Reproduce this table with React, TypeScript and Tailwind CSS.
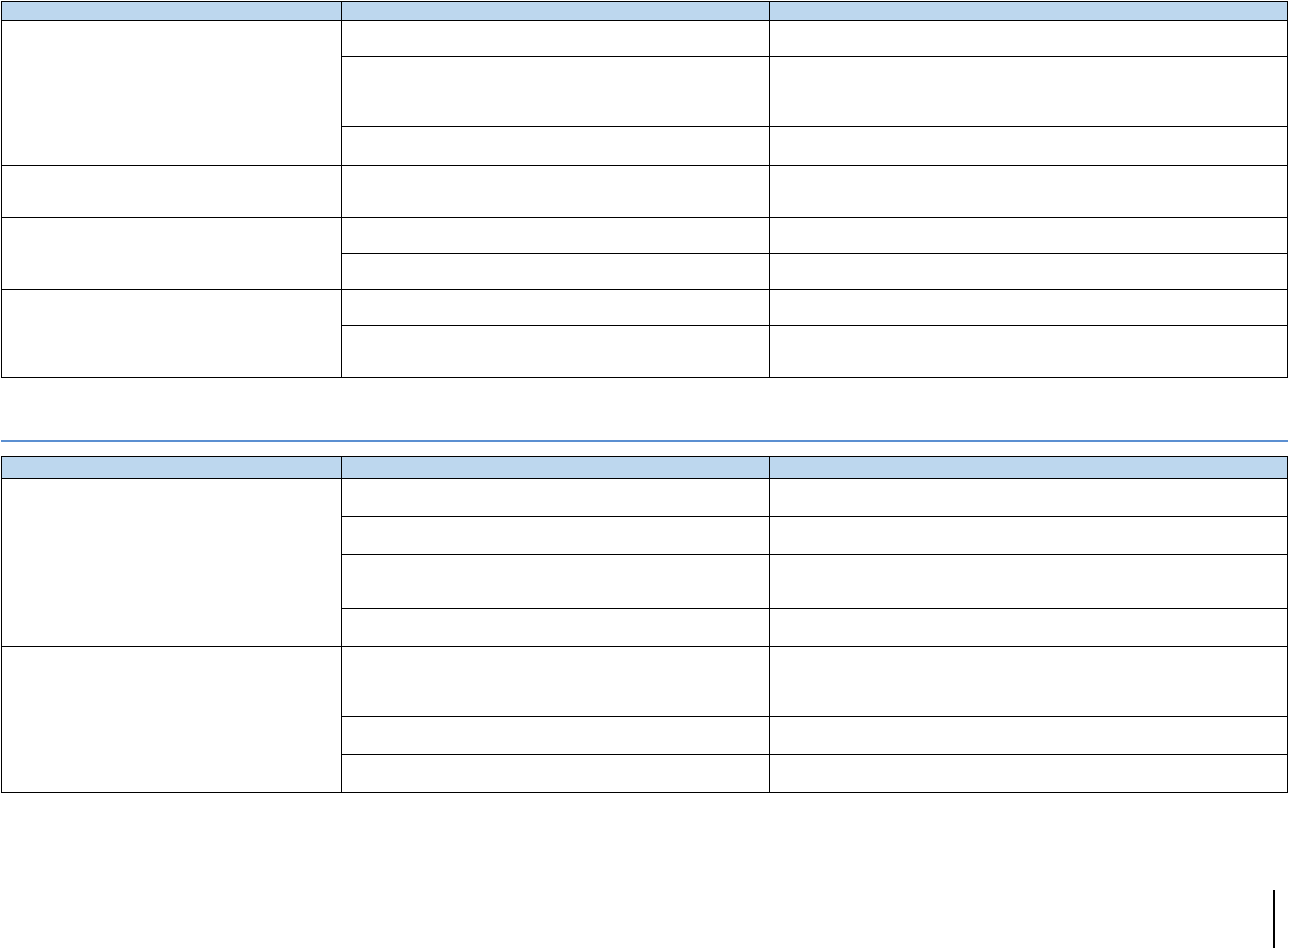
import React from 'react';

type Group = { rows: string[] };

// heights include the bottom rule of each sub row
const tableOne: { header: string; groups: Group[] } = {
  header: 'h-[19px]',
  groups: [
    { rows: ['h-[36px] border-b', 'h-[70px] border-b', 'h-[38px]'] },
    { rows: ['h-[51px]'] },
    { rows: ['h-[36px] border-b', 'h-[35px]'] },
    { rows: ['h-[36px] border-b', 'h-[51px]'] },
  ],
};

const tableTwo: { header: string; groups: Group[] } = {
  header: 'h-[22px]',
  groups: [
    { rows: ['h-[38px] border-b', 'h-[38px] border-b', 'h-[54px] border-b', 'h-[37px]'] },
    { rows: ['h-[70px] border-b', 'h-[38px] border-b', 'h-[37px]'] },
  ],
};

const GridTable = ({ table }: { table: { header: string; groups: Group[] } }) => (
  <div className="ml-[1px] w-[1287px] border border-black box-border flex flex-col">
    {/* Header */}
    <div className={`${table.header} box-border border-b border-black bg-[#bdd7ee] flex`}>
      <div className="w-[340px] border-r border-black box-border" />
      <div className="w-[428px] border-r border-black box-border" />
      <div className="flex-1" />
    </div>

    {table.groups.map((group, gi) => (
      <div
        key={gi}
        className={`flex box-border border-black ${gi < table.groups.length - 1 ? 'border-b' : ''}`}
      >
        <div className="w-[340px] shrink-0 border-r border-black box-border" />
        <div className="flex-1 flex flex-col">
          {group.rows.map((row, ri) => (
            <div key={ri} className={`${row} box-border border-black flex`}>
              <div className="w-[428px] shrink-0 border-r border-black box-border" />
              <div className="flex-1" />
            </div>
          ))}
        </div>
      </div>
    ))}
  </div>
);

export default function App() {
  return (
    <div className="w-[1289px] h-[948px] bg-white pt-[1px] overflow-hidden font-['Liberation_Sans',sans-serif]">
      <GridTable table={tableOne} />

      {/* Section rule */}
      <div className="mt-[62px] ml-[1px] w-[1287px] h-[2px] bg-[#5b8fd1]" />

      <div className="mt-[14px]">
        <GridTable table={tableTwo} />
      </div>

      {/* Page edge marker */}
      <div className="mt-[97px] ml-[1273px] w-[2px] h-[58px] bg-black" />
    </div>
  );
}
